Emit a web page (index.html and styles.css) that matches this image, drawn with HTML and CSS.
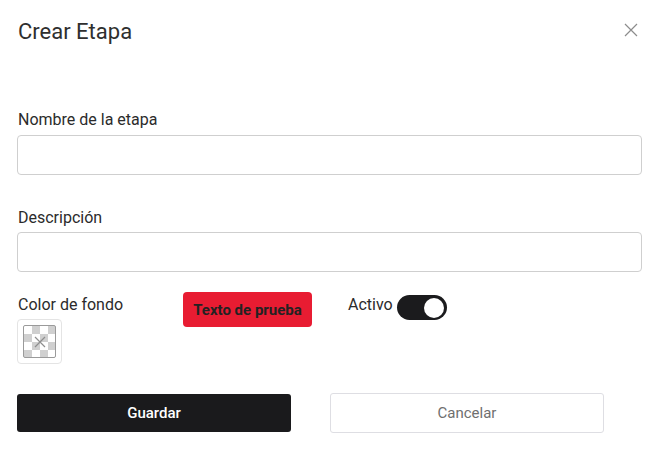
FILE: index.html
```html
<!DOCTYPE html>
<html lang="es">
<head>
<meta charset="utf-8">
<link rel="stylesheet" href="styles.css">
</head>
<body>
<div class="modal">
  <div class="header">
    <h1 class="title">Crear Etapa</h1>
    <button class="close" aria-label="Cerrar">
      <svg width="14" height="14" viewBox="0 0 14 14"><path d="M1 1L13 13M13 1L1 13" stroke="#8c8c8c" stroke-width="1.2" fill="none"/></svg>
    </button>
  </div>
  <div class="field first">
    <label class="label">Nombre de la etapa</label>
    <div class="input"></div>
  </div>
  <div class="field">
    <label class="label">Descripción</label>
    <div class="input"></div>
  </div>
  <div class="options">
    <div class="color-col">
      <span class="label">Color de fondo</span>
      <div class="swatch">
        <div class="checker">
          <svg width="14" height="14" viewBox="0 0 14 14"><path d="M2 2L12 12M12 2L2 12" stroke="#8f8f8f" stroke-width="1.2" fill="none"/></svg>
        </div>
      </div>
    </div>
    <div class="preview">Texto de prueba</div>
    <div class="active">
      <span class="label">Activo</span>
      <div class="toggle"><div class="knob"></div></div>
    </div>
  </div>
  <div class="actions">
    <button class="btn primary">Guardar</button>
    <button class="btn secondary">Cancelar</button>
  </div>
</div>
</body>
</html>
```

FILE: styles.css
```css
* { box-sizing: border-box; }
html, body { margin: 0; padding: 0; background: #fff; }
body { font-family: Roboto, "Liberation Sans", sans-serif; color: #2b2b2b; }
.modal { width: 658px; height: 461px; padding: 0 17px 0 17px; }
.header { display: flex; justify-content: space-between; align-items: flex-start; padding-top: 19px; height: 111px; }
.title { margin: 0 0 0 1px; font-size: 22px; font-weight: 400; line-height: 26px; color: #2f2f2f; }
.close { border: 0; background: none; padding: 0; margin: 4px 3px 0 0; width: 14px; height: 14px; cursor: pointer; }
.close svg { display: block; }
.field { display: flex; flex-direction: column; }
.field + .field { margin-top: 34px; }
.label { font-size: 16px; line-height: 18px; color: #2b2b2b; padding-left: 1px; }
.field .label { margin-bottom: 6px; }
.input { width: 625px; height: 40px; border: 1px solid #cfcfcf; border-radius: 4px; }
.field + .field .label { margin-bottom: 5px; }
.options { display: flex; align-items: flex-start; margin-top: 20px; height: 97px; }
.color-col { display: flex; flex-direction: column; width: 166px; padding-top: 4px; }
.color-col .label { margin-bottom: 5px; }
.swatch { width: 45px; height: 45px; border: 1px solid #e4e4e4; border-radius: 4px; display: flex; align-items: center; justify-content: center; }
.checker { width: 33px; height: 33px; border: 1px solid #9a9a9a; border-radius: 2px; display: flex; align-items: center; justify-content: center;
  background-color: #fff;
  background-image:
    linear-gradient(45deg, #d0d0d0 25%, transparent 25%, transparent 75%, #d0d0d0 75%),
    linear-gradient(45deg, #d0d0d0 25%, transparent 25%, transparent 75%, #d0d0d0 75%);
  background-size: 16px 16px;
  background-position: 0 0, 8px 8px; }
.checker svg { display: block; }
.preview { width: 129px; height: 35px; background: #e81c32; border-radius: 4px; color: #222; font-weight: 700; font-size: 15px; display: flex; align-items: center; justify-content: center; }
.active { display: flex; align-items: flex-start; margin-left: 36px; padding-top: 3px; gap: 4px; }
.active .label { padding-left: 0; padding-top: 1px; }
.toggle { width: 50px; height: 25px; background: #1b1b1d; border-radius: 13px; position: relative; }
.knob { position: absolute; right: 3px; top: 2.5px; width: 20px; height: 20px; border-radius: 50%; background: #fff; }
.actions { display: flex; align-items: center; gap: 39px; margin-top: 4px; }
.btn { font-family: Roboto, "Liberation Sans", sans-serif; font-size: 15px; border-radius: 3px; cursor: pointer; }
.primary { width: 274px; height: 38px; background: #1a1a1c; color: #fff; border: 0; font-weight: 500; }
.secondary { width: 274px; height: 40px; background: #fff; color: #6f6f6f; border: 1px solid #dedee3; }
```
